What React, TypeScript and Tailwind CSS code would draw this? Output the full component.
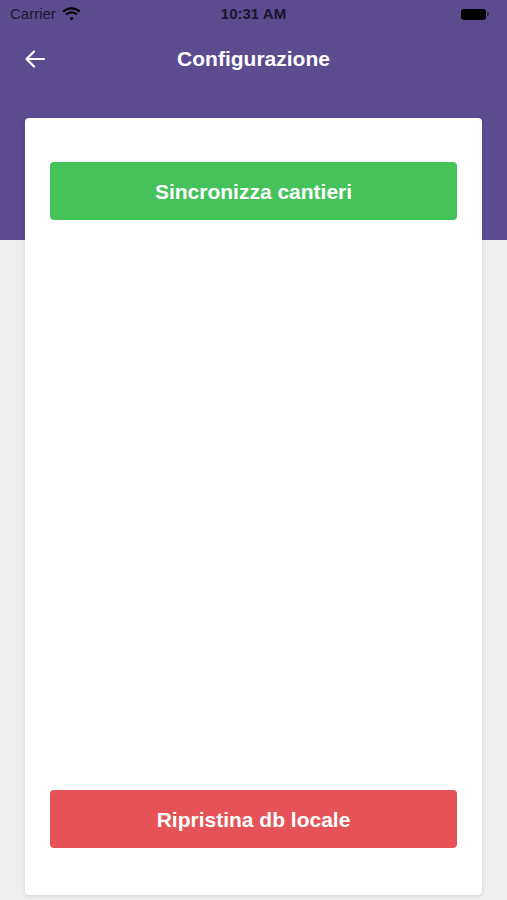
import React from "react";

export default function App() {
  return (
    <div
      className="min-h-[900px] w-full bg-[#efefef]"
      style={{ fontFamily: "'Liberation Sans', Arial, sans-serif" }}
    >
      {/* Purple header block */}
      <div className="h-[240px] bg-[#5c4b8f]">
        {/* Status bar */}
        <div className="relative flex h-[28px] items-center justify-between px-[10px]">
          <div className="flex items-center gap-[6px] text-[15px] text-[#1a1530]">
            <span>Carrier</span>
            <svg width="19" height="14" viewBox="0 0 18 13" fill="#000">
              <path d="M9 2.2c2.7 0 5.2 1 7.1 2.8l1.3-1.4C15.1 1.4 12.2.2 9 .2S2.9 1.4.6 3.6L1.9 5C3.8 3.2 6.3 2.2 9 2.2z" />
              <path d="M9 6c1.7 0 3.3.6 4.5 1.7l1.3-1.4C13.3 4.9 11.2 4 9 4S4.7 4.9 3.2 6.3l1.3 1.4C5.7 6.6 7.3 6 9 6z" />
              <path d="M9 9.6c.8 0 1.5.3 2 .8L9 12.6l-2-2.2c.5-.5 1.2-.8 2-.8z" />
            </svg>
          </div>
          <span className="absolute left-1/2 -translate-x-1/2 text-[15px] font-semibold text-[#1a1530]">
            10:31 AM
          </span>
          <div className="flex items-center pr-[8px]">
            <div className="h-[11px] w-[25px] rounded-[3px] bg-black" />
            <div className="ml-[1px] h-[4px] w-[2px] rounded-r-sm bg-[#2a2440]" />
          </div>
        </div>

        {/* Nav bar */}
        <div className="relative mt-[6px] flex h-[50px] items-center justify-center">
          <svg
            className="absolute left-[24px]"
            width="22"
            height="20"
            viewBox="0 0 22 20"
            fill="none"
            stroke="#fff"
            strokeWidth="2.2"
            strokeLinecap="round"
            strokeLinejoin="round"
          >
            <path d="M20 10H3M10 2.5L2.5 10 10 17.5" />
          </svg>
          <h1 className="text-[21px] font-bold text-white">Configurazione</h1>
        </div>
      </div>

      {/* Card */}
      <div className="mx-[25px] -mt-[122px] flex h-[777px] flex-col justify-between rounded-[4px] bg-white px-[25px] pt-[44px] pb-[47px] shadow-[0_1px_4px_rgba(0,0,0,0.12)]">
        <button className="flex h-[58px] w-full items-center justify-center rounded-[4px] bg-[#45c35a] pt-[2px] text-[21px] font-bold text-white">
          Sincronizza cantieri
        </button>
        <button className="flex h-[58px] w-full items-center justify-center rounded-[4px] bg-[#e55357] pt-[2px] text-[21px] font-bold text-white">
          Ripristina db locale
        </button>
      </div>
    </div>
  );
}
